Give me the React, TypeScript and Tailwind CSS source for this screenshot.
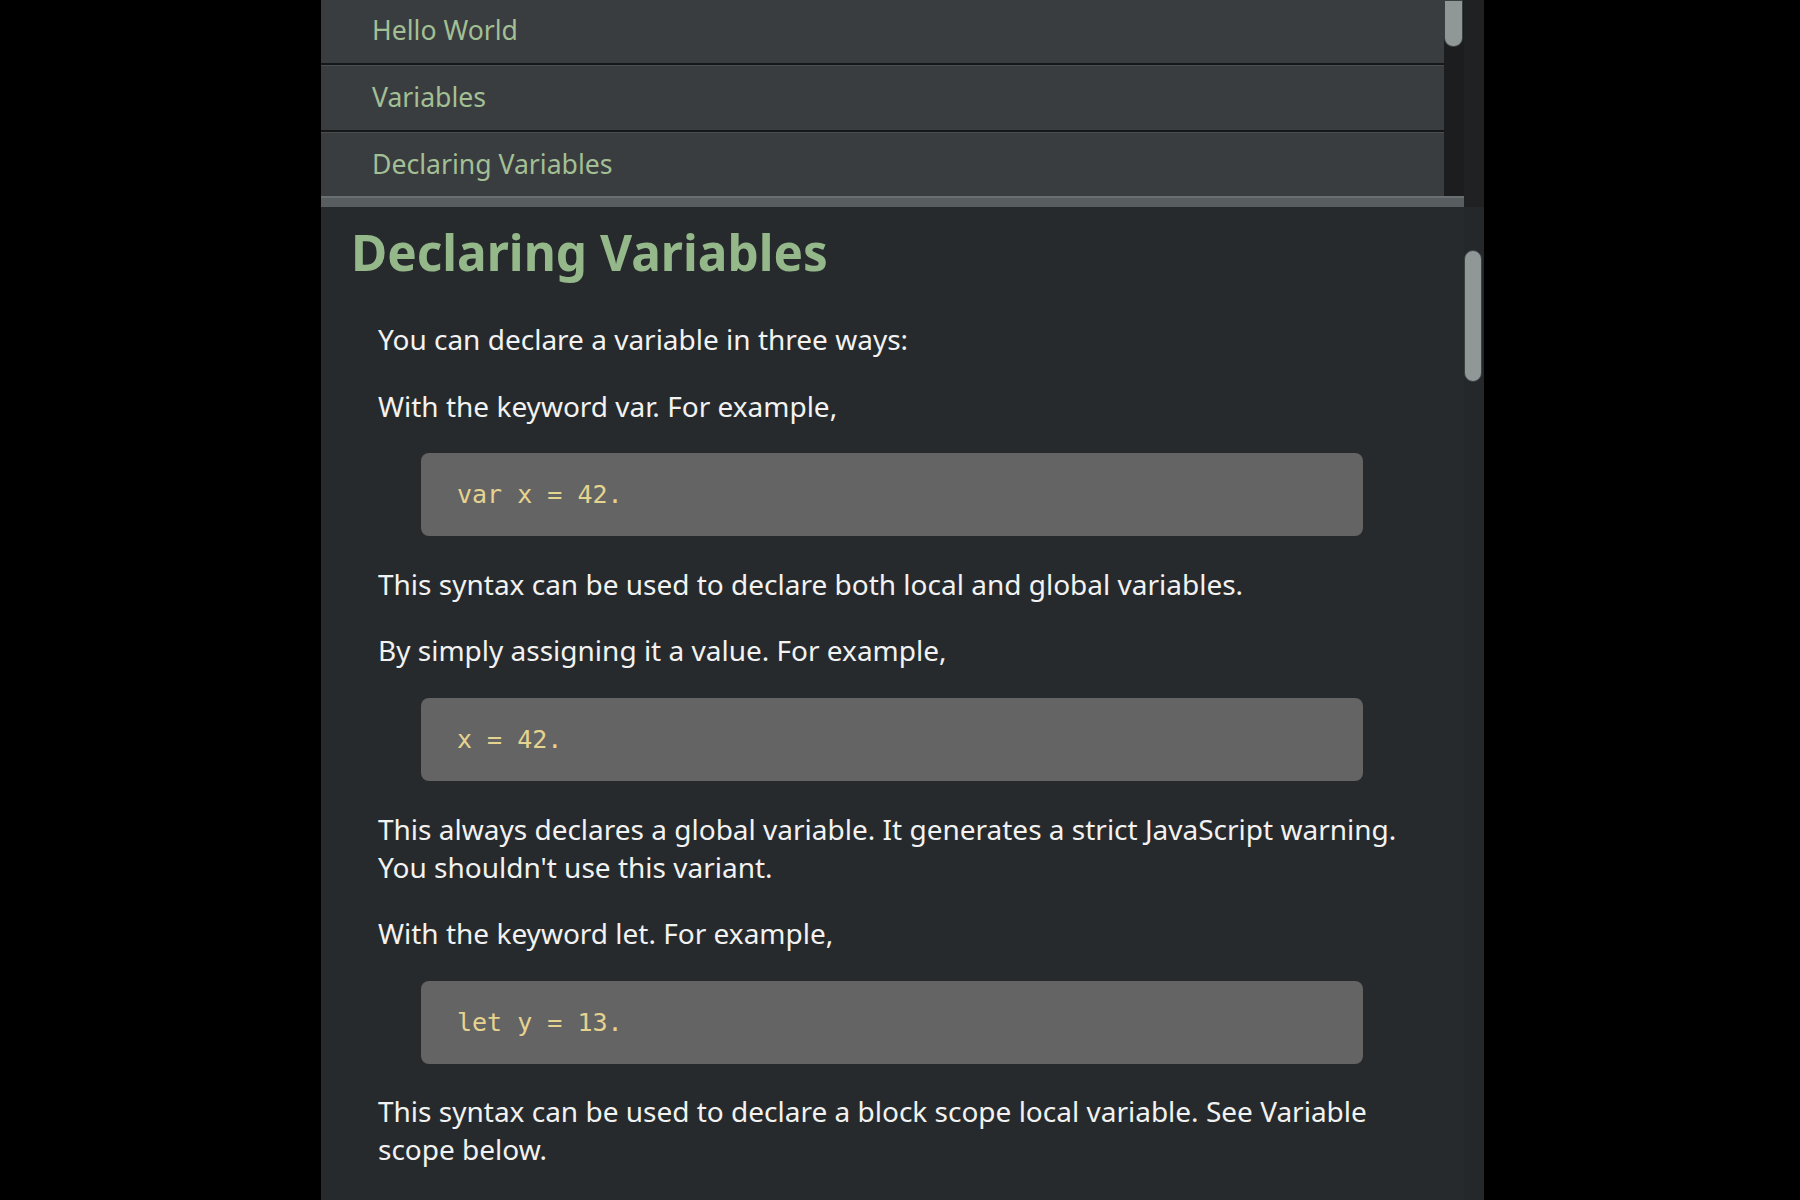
import React from 'react'

const navItems = ['Hello World', 'Variables', 'Declaring Variables']

function CodeBlock({ code }: { code: string }) {
  return (
    <pre className="ml-[43px] mr-[57px] rounded-[8px] bg-[#646464] px-[36px] py-[28px] text-[25px] leading-[27px] text-[#e6d390] [font-family:'DejaVu_Sans_Mono',monospace]">
      {code}
    </pre>
  )
}

function Para({ children }: { children: React.ReactNode }) {
  return <p className="text-[28px] leading-[38px] text-[#f2f2f2]">{children}</p>
}

export default function App() {
  return (
    <div className="flex h-[1200px] w-full overflow-hidden bg-black pl-[321px] [font-family:'Noto_Sans',sans-serif]">
      <div className="flex h-full w-[1163px] bg-[#1e2021]">
        {/* main column */}
        <div className="flex w-[1143px] flex-col">
          {/* nav list */}
          <div className="flex h-[196px] overflow-hidden">
            <div className="flex w-[1123px] flex-col -mt-[2px]">
              {navItems.map((item) => (
                <div
                  key={item}
                  className="flex h-[67px] shrink-0 items-center border-t border-b-2 border-t-[#4a4e50] border-b-[#151718] bg-[#3a3d3f] pl-[51px] text-[26.6px] text-[#a3bf95]"
                >
                  {item}
                </div>
              ))}
            </div>
            <div className="flex w-[20px] flex-col bg-[#1b1d1e]">
              <div className="h-[47px] w-[19px] rounded-b-[9px] border border-[#3a3f40] bg-[#8f9797]" />
            </div>
          </div>
          <div className="h-[11px] border-t-2 border-t-[#6a6f71] bg-[#585d5f]" />

          {/* article */}
          <div className="flex-1 bg-[#272a2c] pr-[44px]">
            <h1 className="ml-[30px] mt-[13px] text-[49.5px] font-bold leading-[64px] text-[#94b88a]">
              Declaring Variables
            </h1>
            <div className="ml-[57px] mt-[36px] flex flex-col gap-[28.6px]">
              <Para>You can declare a variable in three ways:</Para>
              <Para>With the keyword var. For example,</Para>
              <CodeBlock code="var x = 42." />
              <Para>This syntax can be used to declare both local and global variables.</Para>
              <Para>By simply assigning it a value. For example,</Para>
              <CodeBlock code="x = 42." />
              <Para>
                This always declares a global variable. It generates a strict JavaScript warning. You
                shouldn't use this variant.
              </Para>
              <Para>With the keyword let. For example,</Para>
              <CodeBlock code="let y = 13." />
              <Para>
                This syntax can be used to declare a block scope local variable. See Variable scope below.
              </Para>
            </div>
          </div>
        </div>

        {/* outer scrollbar */}
        <div className="flex w-[20px] flex-col">
          <div className="h-[207px] bg-[#1f2122]" />
          <div className="flex-1 bg-[#25282a] pt-[43px]">
            <div className="h-[132px] w-[18px] rounded-[9px] border border-[#3a3f40] bg-[#8f9797]" />
          </div>
        </div>
      </div>
    </div>
  )
}
